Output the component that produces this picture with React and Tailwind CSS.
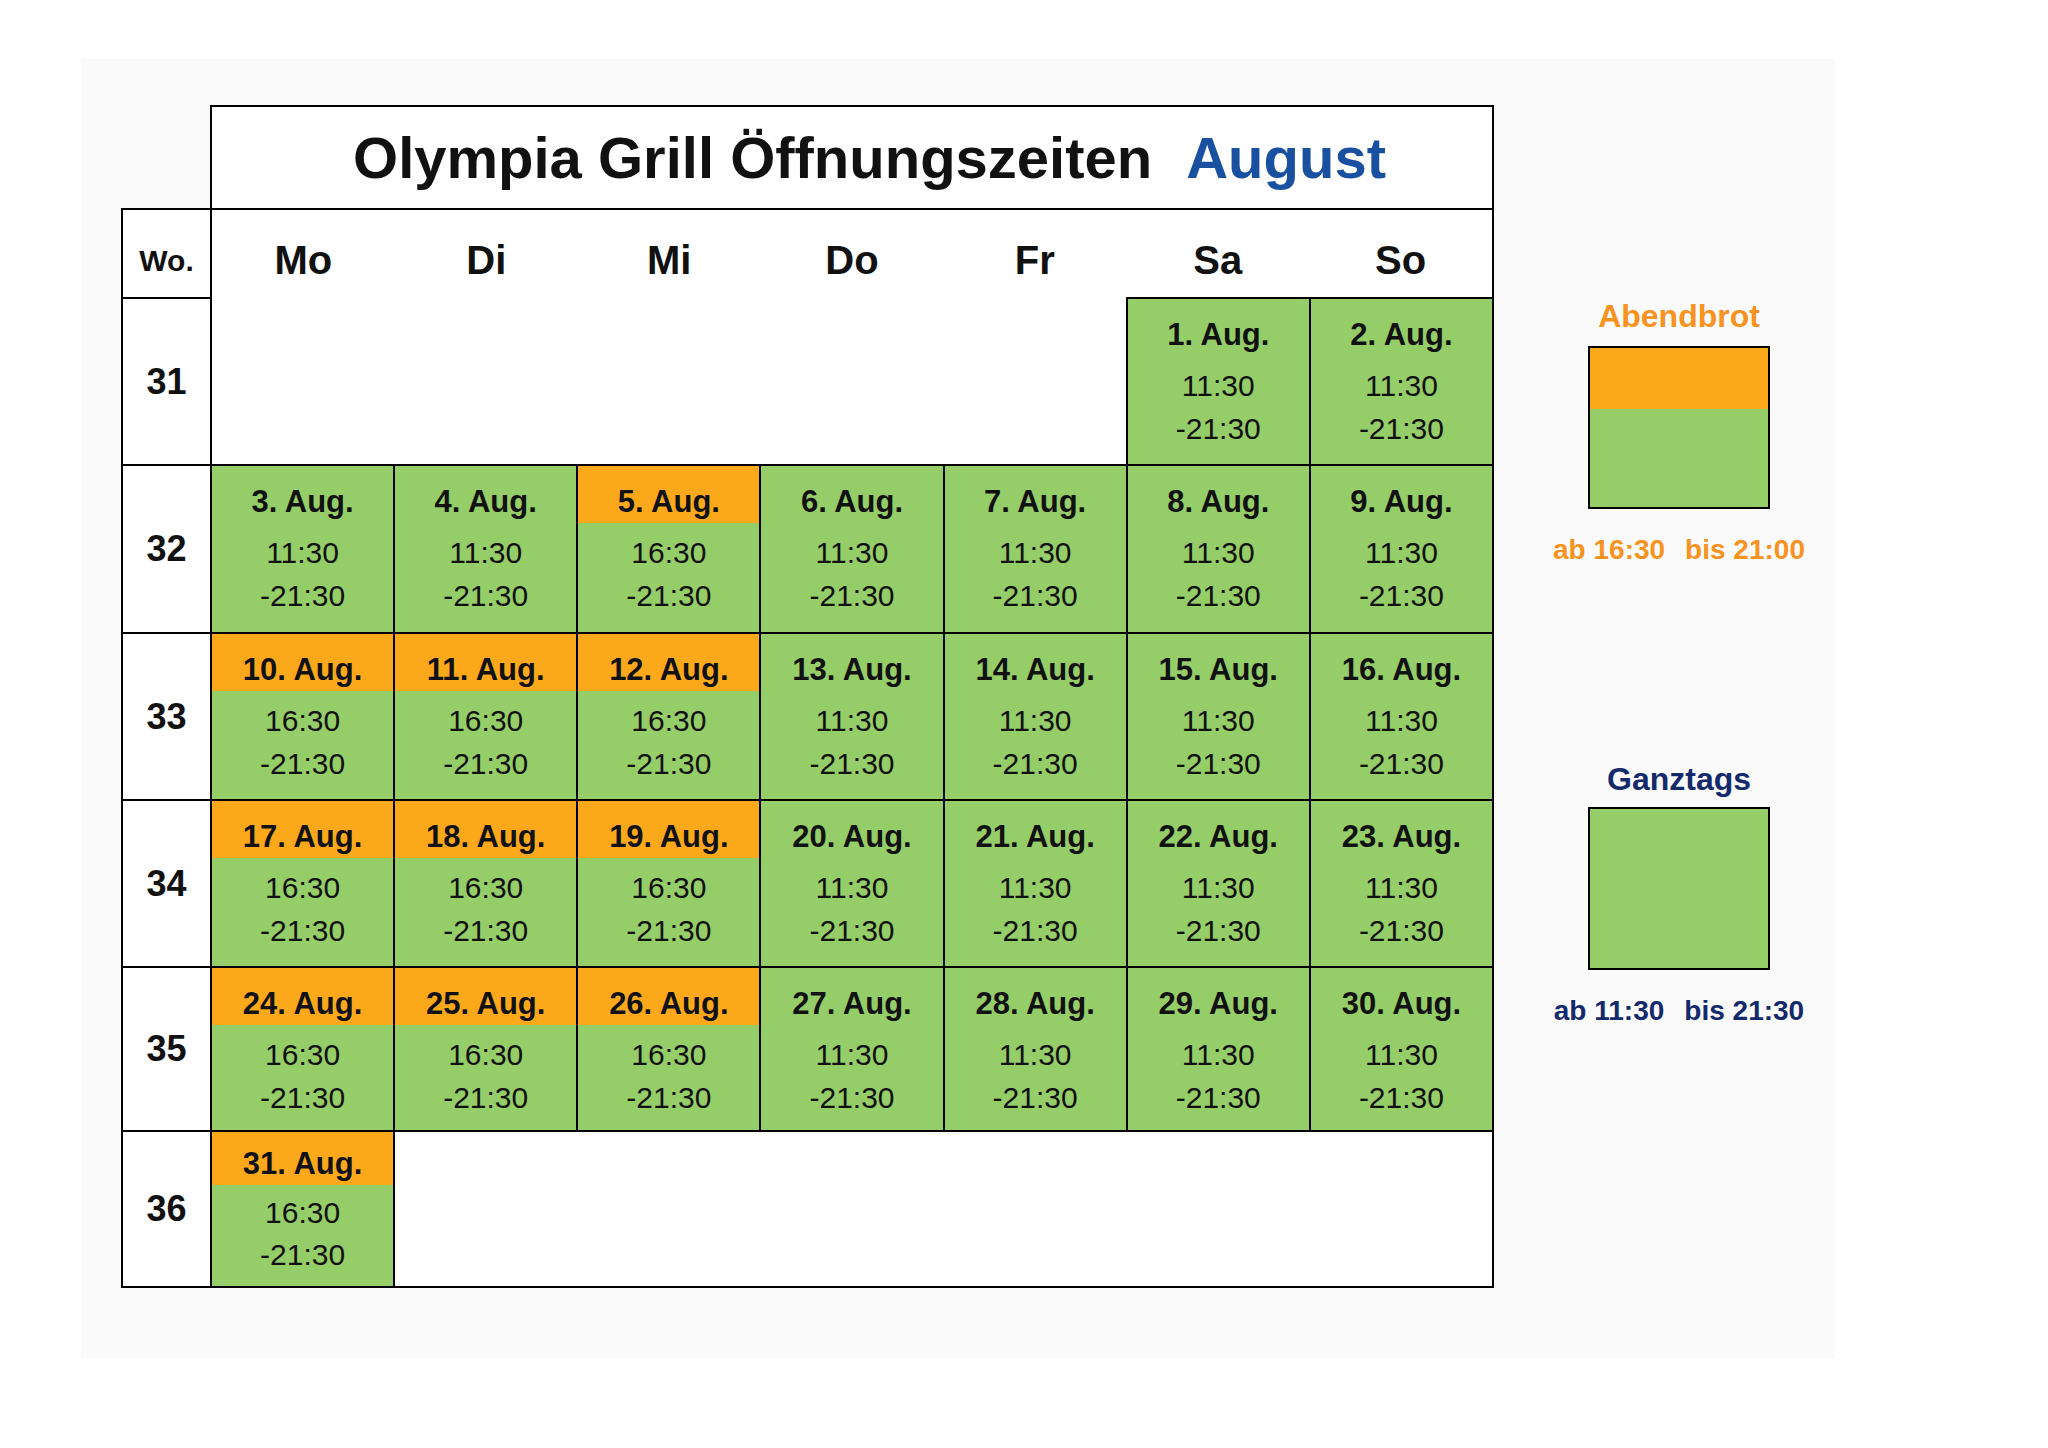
import React from 'react';

const GREEN = 'bg-[#95cd68]';
const FONT = { fontFamily: '"Liberation Sans", Arial, sans-serif' };

// days with the evening-only schedule (Abendbrot)
const eveningDays = [5, 10, 11, 12, 17, 18, 19, 24, 25, 26, 31];

const weeks = [
  { week: 33, days: [10, 11, 12, 13, 14, 15, 16] },
  { week: 34, days: [17, 18, 19, 20, 21, 22, 23] },
  { week: 35, days: [24, 25, 26, 27, 28, 29, 30] },
];

const dayNames = ['Mo', 'Di', 'Mi', 'Do', 'Fr', 'Sa', 'So'];

function WeekCell({ week }) {
  return (
    <div className="border-t-2 border-l-2 border-black bg-white flex items-center justify-center text-[36px] font-bold leading-none text-[#111]">
      {week}
    </div>
  );
}

function DayCell({ day, last }) {
  const evening = eveningDays.includes(day);
  return (
    <div className={`border-t-2 border-l-2 border-black ${GREEN} flex flex-col text-[#111]`}>
      <div
        className={`${last ? 'h-[53px]' : 'h-[57px]'} ${evening ? 'bg-[#fba91b]' : ''} flex items-end justify-center pb-[6px] text-[31px] font-bold leading-none`}
      >
        {day}. Aug.
      </div>
      <div className={`${last ? 'pt-[7px] leading-[42px]' : 'pt-[8px] leading-[43px]'} flex flex-col items-center text-[30px]`}>
        <span>{evening ? '16:30' : '11:30'}</span>
        <span>-21:30</span>
      </div>
    </div>
  );
}

function Legend({ title, titleColor, top, textColor, from, to }) {
  return (
    <>
      <div className={`${titleColor} text-[32px] font-bold leading-none`}>{title}</div>
      <div className={`${title === 'Abendbrot' ? 'mt-[14px]' : 'mt-[12px]'} w-[182px] h-[163px] border-2 border-black flex flex-col`}>
        {top && <div className="h-[61px] bg-[#fba91b]" />}
        <div className={`flex-1 ${GREEN}`} />
      </div>
      <div className={`mt-[27px] flex gap-[20px] ${textColor} text-[28px] font-bold leading-none`}>
        <span>ab {from}</span>
        <span>bis {to}</span>
      </div>
    </>
  );
}

export default function App() {
  return (
    <div className="min-h-screen bg-white pl-[81px] pt-[59px]" style={FONT}>
      <div className="w-[1754px] h-[1299px] bg-[#fafafa] flex pl-[40px] pt-[46px]">
        {/* Calendar */}
        <div className="w-[1373px] flex flex-col">
          <div className="ml-[89px] w-[1284px] h-[103px] border-2 border-b-0 border-black bg-white flex items-center justify-center gap-[34px] pl-[35px] text-[58px] font-bold leading-none">
            <span className="text-[#111]">Olympia Grill Öffnungszeiten</span>
            <span className="text-[#1a50a0]">August</span>
          </div>

          <div className="grid grid-cols-[89px_repeat(7,minmax(0,1fr))] grid-rows-[89px_167px_168px_167px_167px_164px_156px] border-r-2 border-b-2 border-black">
            {/* header */}
            <div className="border-t-2 border-l-2 border-black bg-white flex justify-center pt-[36px] text-[30px] font-bold leading-none text-[#111]">
              Wo.
            </div>
            <div className="col-span-7 border-t-2 border-l-2 border-black bg-white grid grid-cols-7">
              {dayNames.map((d) => (
                <div key={d} className="flex justify-center pt-[30px] text-[40px] font-bold leading-none text-[#111]">
                  {d}
                </div>
              ))}
            </div>

            {/* week 31 */}
            <WeekCell week={31} />
            <div className="col-span-5 border-l-2 border-black bg-white" />
            <DayCell day={1} />
            <DayCell day={2} />

            {/* week 32 */}
            <WeekCell week={32} />
            {[3, 4, 5, 6, 7, 8, 9].map((d) => (
              <DayCell key={d} day={d} />
            ))}

            {weeks.map((w) => (
              <React.Fragment key={w.week}>
                <WeekCell week={w.week} />
                {w.days.map((d) => (
                  <DayCell key={d} day={d} />
                ))}
              </React.Fragment>
            ))}

            {/* week 36 */}
            <WeekCell week={36} />
            <DayCell day={31} last />
            <div className="col-span-6 border-t-2 border-l-2 border-black bg-white" />
          </div>
        </div>

        {/* Legend */}
        <div className="ml-[35px] w-[300px] flex flex-col items-center pt-[195px]">
          <Legend title="Abendbrot" titleColor="text-[#f7931e]" top textColor="text-[#f7931e]" from="16:30" to="21:00" />
          <div className="h-[199px]" />
          <Legend title="Ganztags" titleColor="text-[#142a6b]" textColor="text-[#142a6b]" from="11:30" to="21:30" />
        </div>
      </div>
    </div>
  );
}
